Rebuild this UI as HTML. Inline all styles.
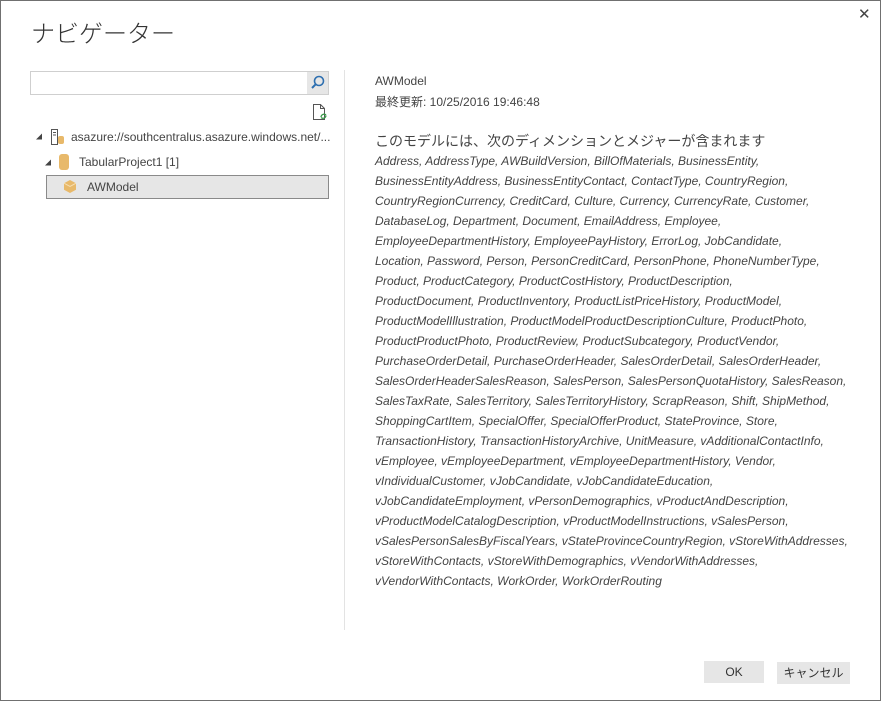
<!DOCTYPE html>
<html><head><meta charset="utf-8"><style>
*{margin:0;padding:0;box-sizing:border-box}
body{width:881px;height:701px;background:#fff;position:relative;overflow:hidden;font-family:"Liberation Sans","Noto Sans CJK JP",sans-serif;color:#333}
.frame{position:absolute;left:0;top:0;width:881px;height:701px;border:1px solid #707070}
.abs{position:absolute;white-space:nowrap}
.title{left:31px;top:14px;font-size:24px;color:#333;font-weight:300}
.close{left:858px;top:5px;font-size:15px;color:#444}
.search{left:30px;top:71px;width:299px;height:24px;border:1px solid #cfcfcf}
.sbtn{position:absolute;right:0;top:0;width:21px;height:22px;background:#e6e6e6}
.tree{font-size:12px;color:#444}
.sel{left:46px;top:175px;width:283px;height:24px;background:#e6e6e6;border:1px solid #8a8a8a}
.divider{left:344px;top:70px;width:1px;height:560px;background:#e3e3e3}
.list{left:375px;top:151px;font-size:12px;font-style:italic;line-height:20px;color:#444}
.btn{height:22px;background:#e6e6e6;font-size:12px;text-align:center;line-height:22px;color:#333}
</style></head><body>
<div class="frame"></div>
<div class="abs title">ナビゲーター</div>
<div class="abs close">✕</div>
<div class="abs search"><div class="sbtn"><svg width="21" height="22" viewBox="0 0 21 22"><circle cx="12" cy="9" r="4.5" fill="none" stroke="#2e6fb0" stroke-width="1.6"/><line x1="8.8" y1="12.2" x2="5" y2="16" stroke="#2e6fb0" stroke-width="2"/></svg></div></div>
<svg class="abs" style="left:312px;top:103px" width="16" height="18" viewBox="0 0 16 18"><path d="M1.5 1.5h7l4 4v11h-11z" fill="#fff" stroke="#555"/><path d="M8.5 1.5v4h4" fill="none" stroke="#555"/><path d="M9 14a3 3 0 0 1 5-2M14 12.5a3 3 0 0 1-5 2" fill="none" stroke="#3a9a4a" stroke-width="1.3"/></svg>
<div class="abs tree" style="left:36px;top:132px;font-size:6px">◢</div>
<svg class="abs" style="left:50px;top:128px" width="16" height="18" viewBox="0 0 16 18"><rect x="1.5" y="1.5" width="6" height="15" fill="#fff" stroke="#555"/><line x1="3" y1="4.5" x2="6" y2="4.5" stroke="#555"/><line x1="3" y1="7" x2="6" y2="7" stroke="#555"/><rect x="8" y="8" width="6" height="8" rx="2" fill="#e8b96a"/></svg>
<div class="abs tree" style="left:71px;top:130px">asazure://southcentralus.asazure.windows.net/...</div>
<div class="abs tree" style="left:45px;top:158px;font-size:6px">◢</div>
<svg class="abs" style="left:58px;top:153px" width="12" height="18" viewBox="0 0 12 18"><rect x="1" y="1" width="10" height="16" rx="3" fill="#e8b96a"/></svg>
<div class="abs tree" style="left:79px;top:155px">TabularProject1 [1]</div>
<div class="abs sel"></div>
<svg class="abs" style="left:63px;top:179px" width="14" height="15" viewBox="0 0 14 15"><path d="M7 1l6 3.2v6.6L7 14 1 10.8V4.2z" fill="#e8b96a"/><path d="M1 4.2L7 7.4l6-3.2" fill="none" stroke="#f6dfb4"/></svg>
<div class="abs tree" style="left:87px;top:180px">AWModel</div>
<div class="abs divider"></div>
<div class="abs" style="left:375px;top:74px;font-size:12px;color:#444">AWModel</div>
<div class="abs" style="left:375px;top:93px;font-size:12px;color:#444">最終更新: 10/25/2016 19:46:48</div>
<div class="abs" style="left:375px;top:131px;font-size:14px;color:#444">このモデルには、次のディメンションとメジャーが含まれます</div>
<div class="abs list">
Address, AddressType, AWBuildVersion, BillOfMaterials, BusinessEntity,<br>
BusinessEntityAddress, BusinessEntityContact, ContactType, CountryRegion,<br>
CountryRegionCurrency, CreditCard, Culture, Currency, CurrencyRate, Customer,<br>
DatabaseLog, Department, Document, EmailAddress, Employee,<br>
EmployeeDepartmentHistory, EmployeePayHistory, ErrorLog, JobCandidate,<br>
Location, Password, Person, PersonCreditCard, PersonPhone, PhoneNumberType,<br>
Product, ProductCategory, ProductCostHistory, ProductDescription,<br>
ProductDocument, ProductInventory, ProductListPriceHistory, ProductModel,<br>
ProductModelIllustration, ProductModelProductDescriptionCulture, ProductPhoto,<br>
ProductProductPhoto, ProductReview, ProductSubcategory, ProductVendor,<br>
PurchaseOrderDetail, PurchaseOrderHeader, SalesOrderDetail, SalesOrderHeader,<br>
SalesOrderHeaderSalesReason, SalesPerson, SalesPersonQuotaHistory, SalesReason,<br>
SalesTaxRate, SalesTerritory, SalesTerritoryHistory, ScrapReason, Shift, ShipMethod,<br>
ShoppingCartItem, SpecialOffer, SpecialOfferProduct, StateProvince, Store,<br>
TransactionHistory, TransactionHistoryArchive, UnitMeasure, vAdditionalContactInfo,<br>
vEmployee, vEmployeeDepartment, vEmployeeDepartmentHistory, Vendor,<br>
vIndividualCustomer, vJobCandidate, vJobCandidateEducation,<br>
vJobCandidateEmployment, vPersonDemographics, vProductAndDescription,<br>
vProductModelCatalogDescription, vProductModelInstructions, vSalesPerson,<br>
vSalesPersonSalesByFiscalYears, vStateProvinceCountryRegion, vStoreWithAddresses,<br>
vStoreWithContacts, vStoreWithDemographics, vVendorWithAddresses,<br>
vVendorWithContacts, WorkOrder, WorkOrderRouting
</div>
<div class="abs btn" style="left:704px;top:661px;width:60px">OK</div>
<div class="abs btn" style="left:777px;top:662px;width:73px">キャンセル</div>
</body></html>
